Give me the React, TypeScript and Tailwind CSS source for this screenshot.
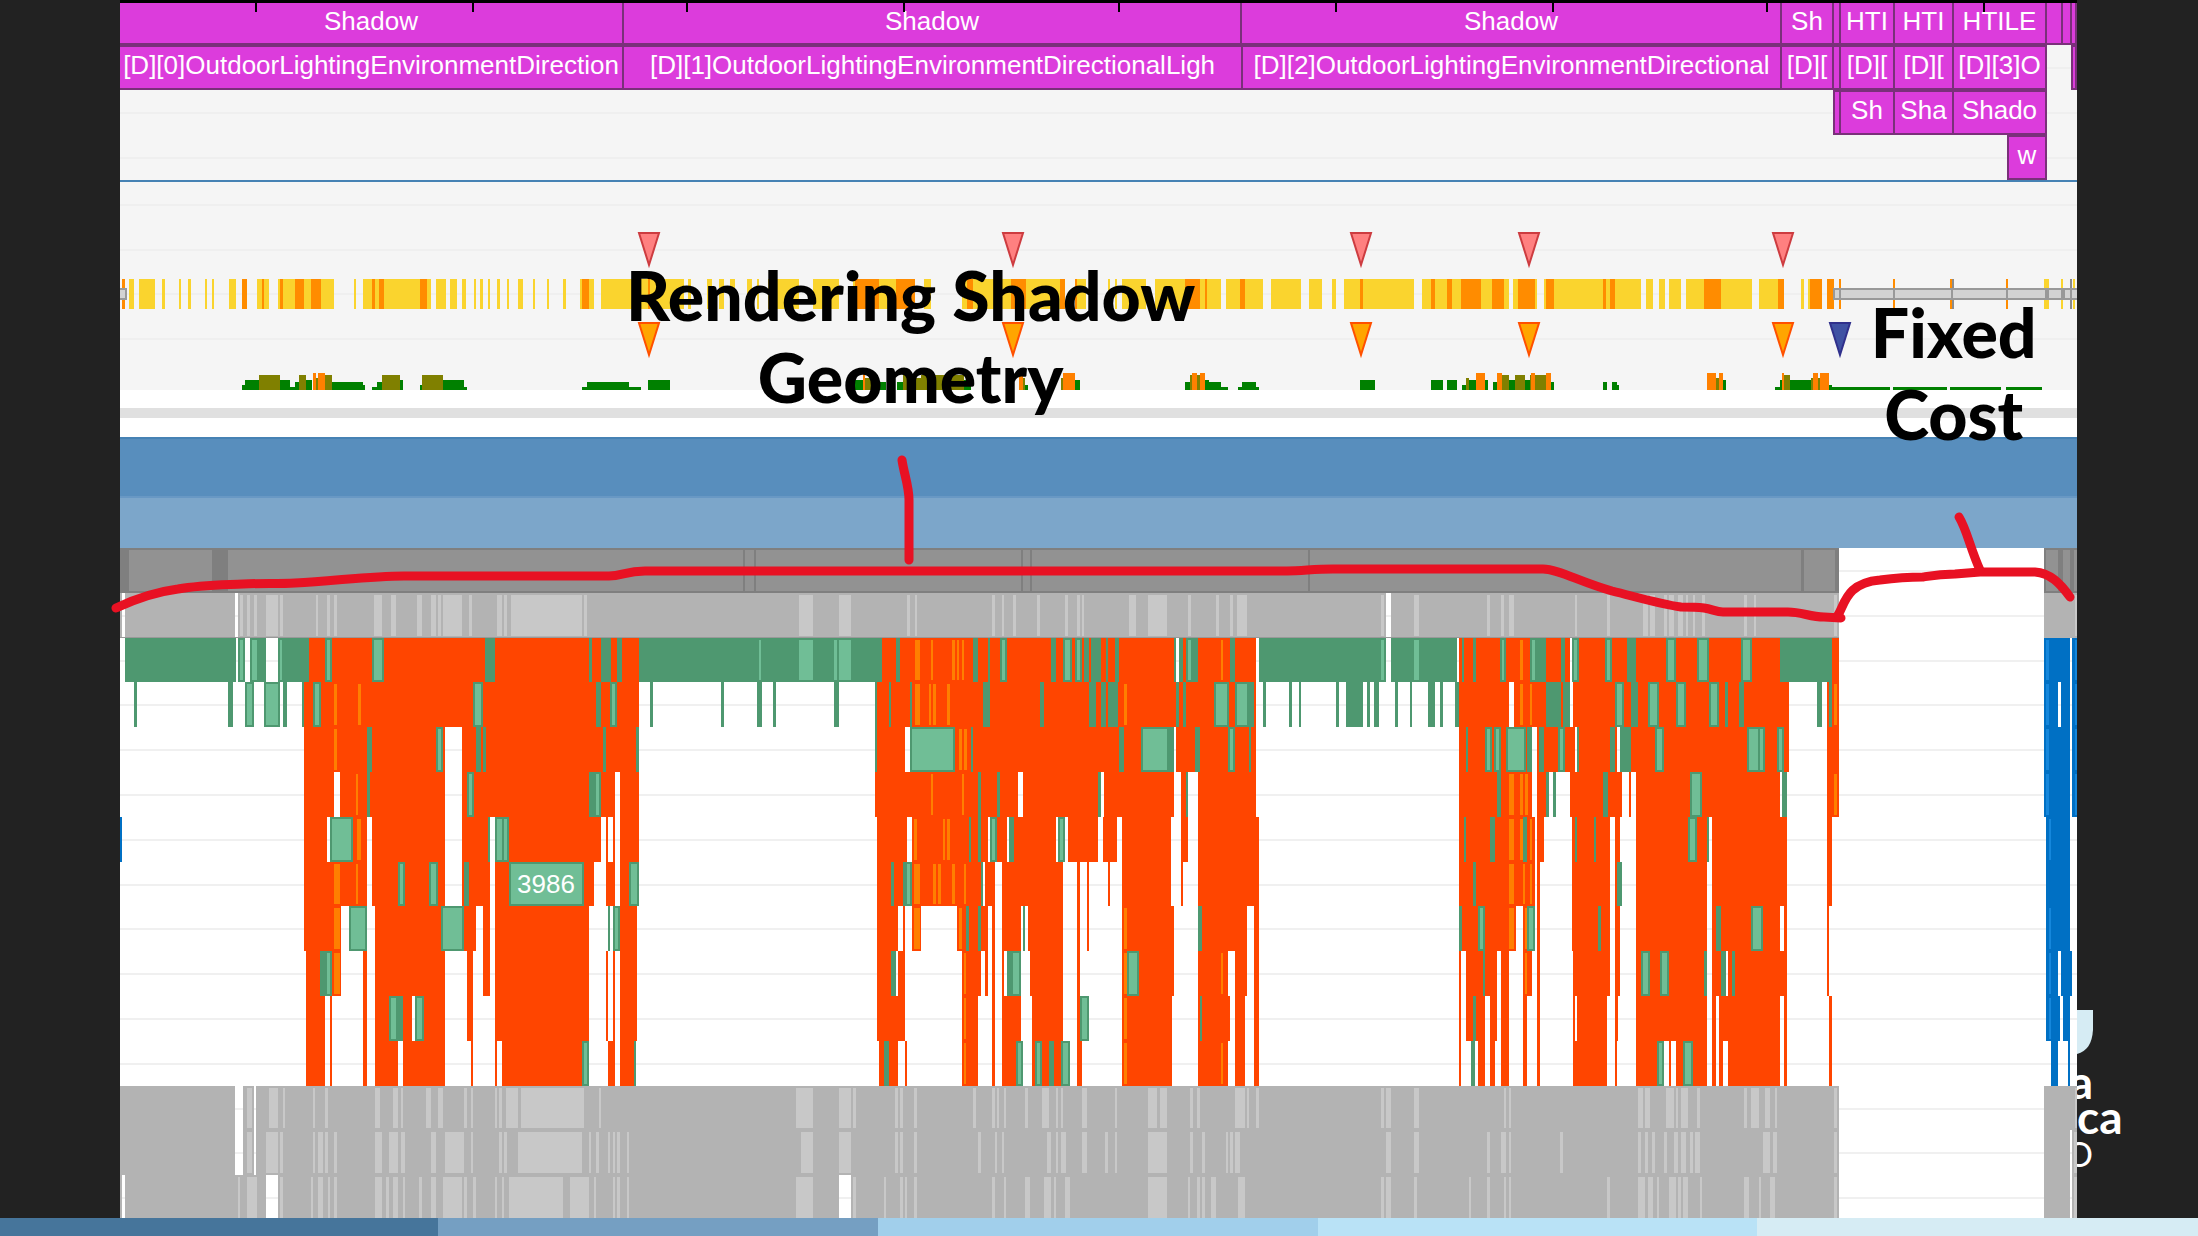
type Bar = { kind: string; from: number; to: number; h: number };

const START = 120;
const SPAN = 1957;
const ROW = 44.8;

const FILL: Record<string, string> = {
  r: "#ff4500",
  g: "#4e9870",
  m: "#70be96",
  h: "#ff7f00",
  w: "#ffffff",
  b: "#0070c4",
  l: "#1587dc",
  k: "#b3b3b3",
  c: "#c8c8c8",
  d: "#7f7f7f",
  e: "#929292",
  y: "#fad42e",
  o: "#ff8c00",
  x: "#8c8c8c",
  G: "#008000",
  O: "#808000",
  H: "#ff8000",
};

// "r304-639" is a red bar from 304 to 639, "G242-245:5" also carries a height
function parseBars(source: string): Bar[] {
  return source
    .trim()
    .split(/\s+/)
    .map((token) => {
      const [range, h] = token.slice(1).split(":");
      const [from, to] = range.split("-").map(Number);
      return { kind: token[0], from, to, h: Number(h || 0) };
    });
}

const passRow = "d120-1839 e129-212 e228-743 e745-754 e756-1021 e1023-1030 e1032-1308 e1310-1801 e1804-1835 d2044-2077 e2046-2058 e2063-2070 e2074-2077";

const waveRow =
  "k120-1839 w122-125 w235-238 w1386-1391 c240-243 c247-250 c254-257 c266-278 c280-283 c316-318 c327-330 c334-337 c374-382 c391-396 c417-422 c431-436 c438-441 c443-462 c469-472 c497-502 c504-507 c511-582 c584-587 c799-813 c839-851 c907-910 c915-917 c992-995 c1002-1004 c1013-1016 c1037-1040 c1065-1068 c1077-1080 c1082-1084 c1129-1136 c1148-1167 c1188-1191 c1216-1219 c1230-1233 c1237-1247 c1381-1384 c1414-1419 c1487-1490 c1501-1504 c1509-1514 c1575-1577 c1607-1610 c1643-1648 c1650-1655 c1664-1667 c1669-1674 c1678-1683 c1686-1688 c1693-1695 c1702-1705 c1744-1747 c1754-1756 c1834-1837 k2044-2077 c2075-2077";

const flameRows = [
  "g125-236 m238-245 g250-266 m250-259 g278-309 m278-284 r309-639 m325-332 m372-384 g485-495 g589-592 g601-611 g617-622 g639-882 m757-763 m797-815 m832-839 m837-853 r882-1256 g896-900 h915-920 h931-933 h952-955 h957-959 h962-964 g973-978 g988-990 m1000-1007 g1051-1056 m1063-1072 m1075-1082 g1084-1089 g1091-1101 g1106-1108 g1115-1119 g1174-1176 w1176-1179 g1179-1183 g1186-1198 m1186-1193 h1221-1223 g1230-1235 g1259-1386 m1379-1386 g1391-1457 m1412-1421 r1459-1839 g1462-1464 g1473-1476 m1500-1506 h1520-1523 g1530-1546 m1530-1537 g1561-1565 w1570-1572 m1572-1579 m1605-1612 g1627-1636 m1666-1676 m1697-1709 m1741-1752 g1780-1832 b2044-2070 l2046-2049 b2072-2077 l2075-2077",
  "g134-137 g228-233 m245-254 m264-280 g283-287 g302-304 r304-639 m313-321 h334-337 h358-361 m473-483 g596-601 m610-617 g650-653 g721-724 g757-762 g773-776 g834-839 r875-1256 g875-877 g889-891 g910-912 h915-920 h929-931 h933-936 h947-950 g983-990 g1040-1044 g1089-1096 g1101-1106 g1108-1118 h1124-1127 g1176-1179 g1183-1186 m1214-1229 g1235-1254 m1235-1249 g1263-1266 g1289-1292 g1299-1301 g1336-1339 g1346-1363 g1367-1370 g1374-1379 g1395-1398 g1410-1412 g1428-1435 g1440-1443 g1455-1459 r1459-1789 w1509-1514 h1520-1523 h1530-1532 g1546-1561 g1563-1570 w1570-1573 m1615-1624 g1631-1638 m1648-1659 m1676-1686 m1709-1719 g1725-1728 g1739-1744 g1817-1822 r1827-1839 g1829-1832 h1834-1837 b2044-2070 l2046-2049 w2058-2061 b2072-2077 l2075-2077",
  "r304-639 h334-337 g367-372 m436-443 w445-462 g476-481 g483-486 g603-606 g636-639 r875-1256 g875-877 w905-910 m910-955 h959-962 h964-967 g971-973 g1119-1124 g1141-1174 m1141-1169 w1174-1176 g1195-1200 m1228-1235 g1249-1251 r1459-1789 g1466-1468 m1485-1492 m1494-1501 m1506-1526 g1527-1532 w1532-1537 g1539-1544 m1558-1565 w1575-1577 g1577-1579 g1610-1615 w1617-1620 g1620-1631 m1655-1664 m1747-1760 m1758-1765 m1777-1784 r1827-1839 b2044-2070 l2046-2049 b2072-2077 l2075-2077",
  "r304-639 w334-340 h356-358 g367-370 w445-462 m467-474 g589-601 m594-601 w615-620 r875-1256 h931-933 h962-964 g978-981 g997-1000 w1018-1023 g1098-1101 w1101-1104 w1174-1181 g1186-1188 w1188-1198 r1459-1780 g1497-1501 h1509-1514 h1520-1523 h1525-1528 w1532-1537 g1546-1549 w1549-1570 g1553-1556 g1603-1608 w1622-1636 r1629-1631 m1690-1702 g1782-1787 r1827-1839 h1834-1837 b2044-2070 l2046-2049 b2072-2077 l2075-2077",
  "b120-122 r304-639 w327-330 m330-353 h357-361 w367-372 w445-462 g488-490 w490-495 m495-504 m502-509 w601-606 w608-613 w615-620 r877-1259 w907-912 h914-917 h943-945 h947-950 g969-971 g978-981 w988-990 m990-997 w1007-1009 g1009-1014 w1056-1058 m1058-1065 w1065-1068 w1098-1103 w1117-1122 w1171-1181 w1188-1198 r1459-1787 g1464-1466 g1490-1495 h1509-1514 h1520-1523 g1523-1527 h1530-1532 w1535-1537 w1544-1572 g1575-1577 g1594-1596 w1610-1615 w1620-1636 m1688-1697 g1707-1709 w1709-1712 r1827-1832 b2046-2070 l2049-2051",
  "r304-639 h334-340 h356-358 w367-372 m398-405 m429-438 w445-462 g464-469 w490-495 m509-584 w594-606 w615-620 m629-639 r877-1259 g891-894 g903-912 m905-912 h914-920 h933-936 h938-941 h952-955 h964-966 g981-983 w983-985 w995-1002 w1063-1122 r1077-1080 r1087-1089 r1108-1110 w1171-1198 r1181-1183 r1459-1787 g1473-1476 h1509-1514 h1523-1525 h1530-1532 w1535-1537 w1540-1572 w1610-1615 g1617-1622 w1622-1636 w1707-1712 r1827-1832 b2046-2070",
  "r304-341 h334-340 m349-367 r375-476 m441-464 r483-490 r495-589 g608-610 m613-620 r620-637 r877-898 r903-905 r912-921 h914-920 r957-988 h959-962 g966-969 g978-981 r992-995 r1002-1021 g1023-1025 r1028-1063 r1077-1080 r1087-1089 r1122-1174 h1124-1127 r1198-1247 g1198-1202 r1254-1259 r1459-1516 g1459-1462 m1478-1485 h1509-1514 r1523-1535 h1525-1527 m1527-1535 r1537-1540 r1572-1610 g1598-1601 r1615-1620 r1636-1707 r1712-1780 g1716-1721 m1751-1763 r1784-1787 r1827-1829 b2046-2070 l2049-2051",
  "r306-341 g320-332 m325-332 h334-340 r363-367 r375-445 r467-473 r483-490 r495-589 r606-608 r613-615 r620-637 r877-905 g891-896 w896-898 r962-981 h964-966 r985-988 r992-995 r1002-1004 g1007-1021 m1011-1021 r1030-1063 r1077-1080 r1122-1174 h1124-1127 m1127-1139 r1198-1228 h1221-1223 r1235-1247 r1254-1259 r1459-1461 r1466-1497 g1483-1485 r1501-1509 r1523-1532 h1525-1527 r1537-1540 r1573-1610 r1615-1620 r1636-1707 m1641-1650 m1660-1669 g1704-1707 r1712-1787 g1721-1726 w1726-1728 g1732-1735 r1827-1829 b2046-2058 l2049-2051 b2061-2072",
  "r306-325 r330-332 r363-367 r375-445 g389-403 m389-398 w412-415 m415-424 r467-473 r495-589 r606-608 r613-615 r620-637 r877-905 r962-978 h964-966 r992-995 r1002-1021 r1032-1063 r1077-1080 m1080-1089 r1122-1172 h1124-1127 r1198-1230 g1200-1202 r1235-1245 r1254-1259 r1459-1461 r1466-1485 g1473-1476 r1490-1497 r1501-1509 r1523-1527 r1537-1540 r1573-1607 w1575-1577 r1615-1618 r1636-1707 r1712-1716 r1719-1780 r1784-1787 r1829-1832 b2046-2060 l2049-2051 b2063-2070",
  "r306-325 r330-332 r363-367 r375-398 r403-445 r471-473 r495-497 r502-589 m582-589 r608-615 r620-636 g634-636 r879-898 g884-889 r905-907 r962-978 h964-966 r992-995 r1002-1021 m1016-1023 r1032-1063 m1035-1042 g1049-1054 m1061-1070 r1077-1082 r1122-1172 h1124-1127 r1198-1228 h1221-1223 r1235-1245 r1254-1259 r1459-1461 g1471-1475 r1478-1485 r1490-1495 r1501-1509 r1523-1527 r1537-1540 r1573-1607 r1615-1617 r1636-1707 m1657-1664 w1664-1676 r1669-1671 m1683-1693 r1712-1716 r1719-1723 r1728-1780 r1784-1787 r1829-1832 b2051-2058 b2068-2070",
];

const idleRows = [
  "k120-1839 w235-243 w254-256 c247-252 c269-278 c283-285 c313-315 c325-328 c375-380 c393-398 c401-403 c426-431 c438-443 c464-467 c471-473 c495-497 c499-502 c506-518 c521-584 c599-601 c796-813 c839-851 c853-856 c895-898 c900-903 c914-917 c973-976 c992-995 c997-999 c1004-1006 c1025-1028 c1042-1049 c1056-1058 c1061-1063 c1082-1087 c1115-1117 c1148-1157 c1160-1167 c1190-1193 c1197-1200 c1235-1245 c1247-1249 c1256-1259 c1381-1384 c1386-1391 c1414-1419 c1504-1506 c1509-1511 c1638-1643 c1645-1650 c1666-1674 c1676-1678 c1681-1688 c1697-1700 c1744-1747 c1751-1759 c1765-1770 c1775-1777 c1834-1837 k2044-2077 c2075-2077",
  "k120-1839 w235-243 w254-256 c247-252 c266-278 c280-283 c313-315 c318-323 c325-328 c334-337 c375-382 c389-398 c401-405 c431-436 c445-464 c471-473 c499-502 c504-507 c518-582 c589-591 c596-599 c608-610 c613-615 c617-620 c627-629 c801-813 c839-851 c895-898 c900-903 c914-917 c978-981 c995-997 c1002-1004 c1047-1051 c1056-1058 c1061-1066 c1082-1087 c1105-1108 c1115-1117 c1148-1167 c1190-1193 c1202-1205 c1226-1228 c1230-1233 c1235-1240 c1386-1391 c1414-1419 c1487-1490 c1501-1506 c1509-1511 c1560-1563 c1638-1641 c1645-1648 c1652-1655 c1664-1667 c1674-1678 c1681-1686 c1690-1693 c1695-1700 c1763-1770 c1773-1777 c1834-1837 k2044-2077 w2070-2072 c2074-2077",
  "k120-1839 w122-125 w266-278 w839-851 c238-240 c247-257 c280-283 c311-313 c318-323 c328-330 c334-337 c375-382 c386-389 c393-398 c403-405 c419-422 c431-436 c443-462 c464-467 c473-476 c495-497 c502-504 c509-563 c570-589 c594-596 c613-615 c617-620 c627-629 c796-813 c853-856 c884-886 c900-903 c905-907 c914-917 c992-995 c1004-1006 c1025-1030 c1044-1051 c1054-1056 c1065-1070 c1148-1167 c1188-1190 c1197-1200 c1202-1205 c1211-1216 c1238-1245 c1381-1384 c1386-1391 c1414-1417 c1469-1471 c1487-1490 c1504-1506 c1509-1511 c1607-1610 c1638-1645 c1648-1653 c1657-1659 c1669-1676 c1678-1681 c1683-1688 c1700-1702 c1744-1749 c1759-1761 c1770-1775 c1834-1837 k2044-2077 w2070-2072 c2074-2077",
];

const stallBars =
  "o122-125 y129-134 y139-155 y162-165 y179-181 y188-191 y205-207 y212-214 y229-236 o242-247 y257-269 o262-264 y278-334 o280-283 o295-304 o311-321 y354-356 y363-431 o372-375 o379-384 o420-427 y436-446 y450-457 y462-466 y474-476 y480-483 y488-490 y497-500 y507-509 y518-523 y533-535 y547-549 y563-566 y580-594 o582-589 y601-684 o648-650 y688-691 y707-712 y719-724 y730-735 y747-752 y757-759 y768-799 y813-839 y853-915 o855-879 o896-915 y924-931 y962-1060 o967-973 o1011-1026 o1060-1065 y1075-1086 o1075-1077 y1108-1110 y1115-1117 y1122-1146 y1155-1221 o1185-1200 o1205-1207 y1226-1263 o1240-1245 y1271-1301 y1309-1322 y1332-1336 y1344-1414 o1360-1363 y1422-1505 o1431-1435 o1447-1452 o1461-1481 o1492-1504 y1504-1509 y1513-1537 o1518-1535 y1544-1641 o1546-1554 o1603-1606 o1610-1615 y1646-1653 y1659-1665 y1669-1681 y1686-1752 o1704-1721 y1759-1784 o1778-1784 y1801-1804 y1808-1822 o1810-1822 o1827-1834 o1839-1841 o1893-1895 o1950-1952 x1952-1954 o2006-2008 y2044-2049 y2061-2063 x2070-2072 y2073-2075";

const occupancyBars =
  "G242-245:5 G245-259:10 O259-280:15 G280-290:10 G290-295:3 G295-299:8 O299-306:15 G306-312:10 H313-316:17 O316-318:12 H318-325:17 O325-332:15 G332-363:8 G363-365:5 G372-377:3 G377-382:8 O382-400:15 G400-403:10 G420-422:5 O422-443:15 G443-464:10 G464-467:3 G582-587:3 G587-629:8 G629-641:3 G648-670:10 G855-863:10 H863-865:17 O865-874:12 G874-886:8 G897-903:8 O903-908:15 H908-911:17 O911-921:12 O921-964:15 G964-971:10 H1019-1023:17 O1023-1025:12 G1025-1028:5 O1061-1063:12 H1063-1075:17 G1075-1080:10 G1185-1190:8 O1190-1192:15 H1192-1197:17 O1197-1200:15 H1200-1205:17 G1205-1209:10 G1209-1221:8 G1221-1228:3 G1238-1242:3 G1242-1256:8 G1256-1259:3 G1360-1375:10 G1431-1443:10 G1447-1457:10 G1462-1466:5 O1466-1469:12 G1469-1476:10 H1476-1485:17 G1485-1488:10 G1493-1497:8 H1497-1502:17 O1502-1509:15 G1509-1515:10 O1515-1525:15 G1525-1530:10 O1530-1546:15 H1531-1535:17 H1546-1551:17 G1551-1554:8 G1603-1607:8 G1612-1617:8 G1617-1619:5 H1707-1716:17 O1716-1719:12 H1719-1723:17 G1723-1726:10 G1775-1780:3 G1780-1782:10 H1782-1784:17 O1784-1790:15 G1790-1811:10 O1811-1813:12 H1813-1818:17 O1818-1820:12 H1820-1829:17 G1829-1832:5 G1832-1890:3 G1893-1947:3 G1950-2001:3 G2006-2042:3";

type Marker = { from: number; to: number; label?: string };

const markerRows: Marker[][] = [
  [
    { from: 120, to: 624, label: "Shadow" },
    { from: 624, to: 1242, label: "Shadow" },
    { from: 1242, to: 1782, label: "Shadow" },
    { from: 1782, to: 1834, label: "Sh" },
    { from: 1834, to: 1841 },
    { from: 1841, to: 1895, label: "HTI" },
    { from: 1895, to: 1954, label: "HTI" },
    { from: 1954, to: 2047, label: "HTILE" },
    { from: 2047, to: 2063 },
    { from: 2063, to: 2072 },
    { from: 2072, to: 2077 },
  ],
  [
    { from: 120, to: 624, label: "[D][0]OutdoorLightingEnvironmentDirection" },
    { from: 624, to: 1243, label: "[D][1]OutdoorLightingEnvironmentDirectionalLigh" },
    { from: 1243, to: 1782, label: "[D][2]OutdoorLightingEnvironmentDirectional" },
    { from: 1782, to: 1834, label: "[D][" },
    { from: 1834, to: 1841 },
    { from: 1841, to: 1895, label: "[D][" },
    { from: 1895, to: 1954, label: "[D][" },
    { from: 1954, to: 2047, label: "[D][3]O" },
    { from: 2071, to: 2077 },
  ],
  [
    { from: 1833, to: 1841 },
    { from: 1841, to: 1895, label: "Sh" },
    { from: 1895, to: 1954, label: "Sha" },
    { from: 1954, to: 2047, label: "Shado" },
  ],
  [{ from: 2007, to: 2047, label: "w" }],
];

const percent = (value: number) => `${(value / SPAN) * 100}%`;

function MarkerRow({ markers, first }: { markers: Marker[]; first?: boolean }) {
  return (
    <div className="flex h-[45px] bg-[linear-gradient(180deg,transparent_22px,#efefef_22px,#efefef_24px,transparent_24px)]">
      {markers.map((marker, index) => {
        const previous = index ? markers[index - 1].to : START;
        return (
          <div
            key={marker.from}
            className={`h-[45px] shrink-0 overflow-hidden border-r-2 border-b-2 border-[#7a307a] bg-[#dc3cdc] text-center text-[26px] whitespace-nowrap text-white ${first ? "leading-[42px]" : "border-t-2 leading-[36px]"} ${marker.from > previous ? "border-l-2" : ""}`}
            style={{ width: percent(marker.to - marker.from), marginLeft: percent(marker.from - previous) }}
          >
            {marker.label ? <span className="flex justify-center">{marker.label}</span> : null}
          </div>
        );
      })}
    </div>
  );
}

function TimeRuler() {
  const ticks = [256, 473, 687, 904, 1119, 1336, 1553, 1767, 1984];
  return (
    <svg viewBox={`${START} 0 ${SPAN} 12`} preserveAspectRatio="none" shapeRendering="crispEdges" className="absolute inset-x-0 top-0 h-3 w-full">
      <rect x={START} y="0" width={SPAN} height="3" fill="#000" />
      {ticks.map((x) => (
        <rect key={x} x={x - 1} y="0" width="2" height="12" fill="#000" />
      ))}
    </svg>
  );
}

function Pin({ x, y, fill, stroke }: { x: number; y: number; fill: string; stroke: string }) {
  return <path d={`M${x - 10} ${y + 1}H${x + 10}L${x} ${y + 33}Z`} fill={fill} stroke={stroke} strokeWidth="2" />;
}

function CounterTrack() {
  const pins = [649, 1013, 1361, 1529, 1783];
  const gaps = [1834, 1840, 1894, 1952, 2007, 2046, 2062, 2071];
  return (
    <svg viewBox={`${START} 182 ${SPAN} 208`} preserveAspectRatio="none" className="block h-[208px] w-full">
      <g shapeRendering="crispEdges">
        {[204, 249, 293, 338].map((y) => (
          <rect key={y} x={START} y={y} width={SPAN} height="2" fill="#efefef" />
        ))}
        {parseBars(stallBars).map((bar, index) => (
          <rect key={index} x={bar.from} y="279" width={bar.to - bar.from} height="30" fill={FILL[bar.kind]} />
        ))}
        <rect x="112" y="289" width="14" height="10" fill="#d3d3d3" stroke="#999" strokeWidth="2" />
        <rect x="1834" y="289" width="250" height="10" fill="#d3d3d3" stroke="#999" strokeWidth="2" />
        {gaps.map((x) => (
          <rect key={x} x={x - 1} y="288" width={x === 2046 || x === 2062 ? 4 : 2} height="12" fill="#999" />
        ))}
        {parseBars(occupancyBars).map((bar, index) => (
          <rect key={index} x={bar.from} y={390 - bar.h} width={bar.to - bar.from} height={bar.h} fill={FILL[bar.kind]} />
        ))}
      </g>
      {pins.map((x) => (
        <g key={x}>
          <Pin x={x} y={232} fill="#ff8080" stroke="#cd3c40" />
          <Pin x={x} y={322} fill="#ffa500" stroke="#ff5000" />
        </g>
      ))}
      <Pin x={1840} y={322} fill="#3f51a3" stroke="#30308c" />
    </svg>
  );
}

function FlameBar({ bar, row }: { bar: Bar; row: number }) {
  const top = Math.round(row * ROW);
  const height = Math.round((row + 1) * ROW) - top;
  const width = bar.to - bar.from;
  if (bar.kind === "m") {
    return (
      <>
        <rect x={bar.from} y={top} width={width} height={height} fill={FILL.g} />
        <rect x={bar.from + 2} y={top + 2} width={width - 4} height={height - 4} fill={FILL.m} />
      </>
    );
  }
  const inset = "hlce".includes(bar.kind) ? 2 : 0;
  if (bar.kind === "w") {
    return (
      <>
        <rect x={bar.from} y={top} width={width} height={height} fill={FILL.w} />
        <rect x={bar.from} y={top + 22} width={width} height="2" fill="#f0f0f0" />
      </>
    );
  }
  return <rect x={bar.from} y={top + inset} width={width} height={height - inset * 2} fill={FILL[bar.kind]} />;
}

function FlameChart() {
  const rows = [passRow, waveRow, ...flameRows, ...idleRows];
  return (
    <svg viewBox={`${START} 0 ${SPAN} 670`} preserveAspectRatio="none" className="block h-[670px] w-full bg-white">
      <g shapeRendering="crispEdges">
        {rows.map((source, row) => (
          <g key={row}>
            <rect x={START} y={Math.round(row * ROW) + 22} width={SPAN} height="2" fill="#f0f0f0" />
            {parseBars(source).map((bar, index) => (
              <FlameBar key={index} bar={bar} row={row} />
            ))}
          </g>
        ))}
        <rect x={START} y="89" width="1719" height="1" fill="#999" />
      </g>
      <text x="546" y="345" textAnchor="middle" fontSize="26" fill="#fff">
        3986
      </text>
    </svg>
  );
}

function Annotations() {
  return (
    <>
      <svg
        viewBox={`${START} 0 ${SPAN} 1218`}
        preserveAspectRatio="none"
        className="pointer-events-none absolute inset-0 h-full w-full overflow-visible"
        fill="none"
        stroke="#e81123"
        strokeWidth="9"
        strokeLinecap="round"
        strokeLinejoin="round"
      >
        <path d="M116 608C135 599 155 592 178 589C200 585 220 585 243 584C262 583 278 584 295 583C335 581 370 576 404 576H609C622 576 626 571 645 571H1287C1303 571 1313 569 1333 569H1543C1558 569 1580 582 1612 591C1640 598 1660 604 1681 607C1690 607 1696 607 1704 608C1712 609 1716 612 1723 612H1788C1802 612 1810 617 1824 617L1841 618" />
        <path d="M1838 615C1845 604 1846 583 1880 580C1895 578 1908 577 1923 577C1935 575 1940 574 1955 574L1980 572H2035C2050 573 2060 583 2070 597" />
        <path d="M902 460C904 474 909 486 909 500V560" />
        <path d="M1959 517C1967 530 1970 548 1980 570" />
      </svg>
      <h1 className="absolute top-[254px] left-[40.4%] -translate-x-1/2 text-center font-['Lato',sans-serif] text-[68px] leading-[82px] font-black whitespace-nowrap text-black">
        Rendering Shadow
        <br />
        Geometry
      </h1>
      <h2 className="absolute top-[291px] left-[93.7%] -translate-x-1/2 text-center font-['Lato',sans-serif] text-[68px] leading-[82px] font-black text-black">
        Fixed
        <br />
        Cost
      </h2>
    </>
  );
}

function Logo() {
  return (
    <aside className="flex w-[121px] shrink-0 flex-col overflow-hidden pt-[1010px] font-['Lato',sans-serif] text-white">
      <svg viewBox="0 0 16 44" className="h-11 w-4">
        <path d="M0 0H16V20C15 34 10 41 0 44Z" fill="#d6ecf4" />
      </svg>
      <div className="flex w-4 justify-end pt-[10px] text-[46px] leading-[35px] font-bold">
        <span>a</span>
      </div>
      <div className="text-[46px] leading-[35px] font-bold">ca</div>
      <div className="flex w-4 justify-end text-[34px] leading-[40px]">O</div>
    </aside>
  );
}

function ProgressStrip() {
  return (
    <footer className="mt-auto grid h-[18px] grid-cols-[438fr_440fr_440fr_439fr_441fr]">
      <div className="bg-[#46759b]" />
      <div className="bg-[#759fc2]" />
      <div className="bg-[#a1cfeb]" />
      <div className="bg-[#b9e2f6]" />
      <div className="bg-[#d6ecf4]" />
    </footer>
  );
}

export default function App() {
  return (
    <div className="flex min-h-screen flex-col bg-[#222222] font-['Liberation_Sans',Arial,sans-serif]">
      <div className="flex">
        <main className="relative ml-[120px] min-w-0 flex-1">
          <section className="relative bg-[#f5f5f5]">
            {markerRows.map((markers, index) => (
              <MarkerRow key={index} markers={markers} first={index === 0} />
            ))}
            <TimeRuler />
            <div className="h-[2px] bg-[#4682b4]" />
            <CounterTrack />
          </section>
          <div className="bg-white pt-[18px] pb-[19px]">
            <div className="h-[10px] bg-[#e0e0e0]" />
          </div>
          <div className="h-[59px] border-t-2 border-[#4682b4] bg-[#588ebd]" />
          <div className="h-[52px] border-t-2 border-[#6898c4] bg-[#7ca6ca]" />
          <FlameChart />
          <Annotations />
        </main>
        <Logo />
      </div>
      <ProgressStrip />
    </div>
  );
}
